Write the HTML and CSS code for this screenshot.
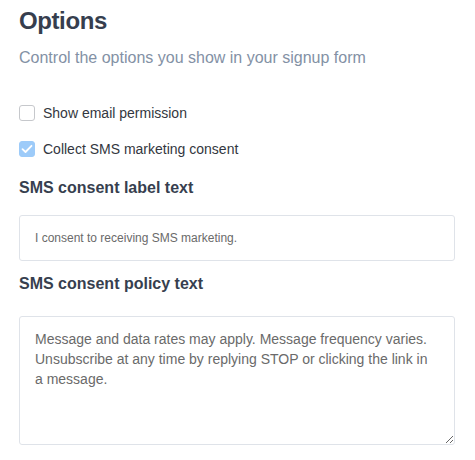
FILE: index.html
```html
<!DOCTYPE html>
<html>
<head>
<meta charset="utf-8">
<link rel="stylesheet" href="styles.css">
</head>
<body>
<div class="panel">
  <h1 class="title">Options</h1>
  <p class="subtitle">Control the options you show in your signup form</p>
  <label class="check-row first">
    <span class="box"></span>
    <span class="check-label">Show email permission</span>
  </label>
  <label class="check-row second">
    <span class="box checked">
      <svg width="12" height="10" viewBox="0 0 12 10"><path d="M1.5 5.2 L4.5 8 L10.5 1.8" fill="none" stroke="#fff" stroke-width="1.8" stroke-linecap="round" stroke-linejoin="round"/></svg>
    </span>
    <span class="check-label">Collect SMS marketing consent</span>
  </label>
  <div class="field-label label-one">SMS consent label text</div>
  <div class="text-input">I consent to receiving SMS marketing.</div>
  <div class="field-label label-two">SMS consent policy text</div>
  <textarea class="text-area">Message and data rates may apply. Message frequency varies. Unsubscribe at any time by replying STOP or clicking the link in a message.</textarea>
</div>
</body>
</html>
```
FILE: styles.css
```css
html, body {
  margin: 0;
  padding: 0;
  background: #ffffff;
}
body {
  font-family: "Liberation Sans", Arial, sans-serif;
}
.panel {
  width: 475px;
  box-sizing: border-box;
  padding: 0 20px 0 19px;
  display: flex;
  flex-direction: column;
}
.title {
  margin: 6px 0 0;
  font-size: 24px;
  line-height: 30px;
  font-weight: bold;
  letter-spacing: -0.4px;
  color: #363e4e;
}
.subtitle {
  margin: 12px 0 0;
  font-size: 16px;
  line-height: 20px;
  color: #8391a5;
}
.check-row {
  display: flex;
  align-items: flex-start;
  gap: 8px;
  height: 16px;
}
.check-row.first { margin-top: 37px; }
.check-row.second { margin-top: 20px; }
.box {
  width: 16px;
  height: 16px;
  box-sizing: border-box;
  border: 1px solid #c6c8cc;
  border-radius: 3px;
  background: #fff;
  display: flex;
  align-items: center;
  justify-content: center;
  flex: none;
}
.box.checked {
  border-color: #9dcbf9;
  background: #9dcbf9;
}
.check-label {
  font-size: 14px;
  line-height: 16px;
  color: #333740;
}
.field-label {
  font-size: 16px;
  line-height: 20px;
  font-weight: bold;
  color: #373f4f;
}
.label-one { margin-top: 21px; }
.label-two { margin-top: 13px; }
.text-input {
  margin-top: 17px;
  height: 46px;
  box-sizing: border-box;
  border: 1px solid #dfe3e9;
  border-radius: 3px;
  padding: 0 15px;
  display: flex;
  align-items: center;
  font-size: 12px;
  color: #6a6a6a;
}
.text-area {
  margin: 22px 0 0;
  height: 129px;
  box-sizing: border-box;
  border: 1px solid #dfe3e9;
  border-radius: 3px;
  padding: 12px 15px;
  font-family: "Liberation Sans", Arial, sans-serif;
  font-size: 14px;
  line-height: 20px;
  color: #6a6a6a;
  resize: vertical;
  overflow: hidden;
  outline: none;
}
```
